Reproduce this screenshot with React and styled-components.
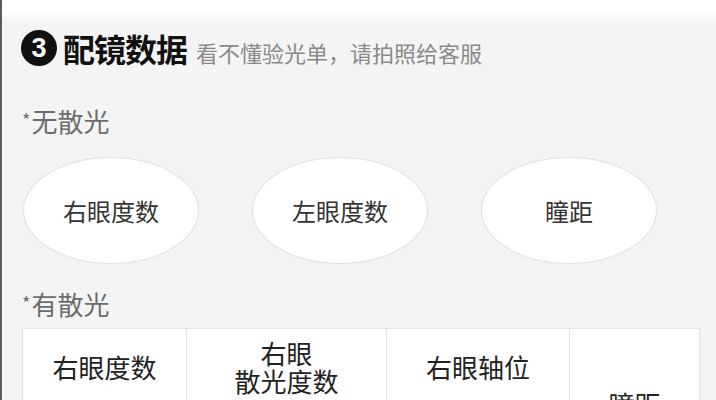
import styled, { createGlobalStyle } from "styled-components";

const GlobalStyle = createGlobalStyle`
  body {
    margin: 0;
    background: #f4f4f4;
    font-family: "Noto Sans CJK SC", "Noto Sans", sans-serif;
  }
`;

const noAstigmatism = ["右眼度数", "左眼度数", "瞳距"];

const App = () => {
  return (
    <Page>
      <GlobalStyle />
      <Header>
        <StepBadge>3</StepBadge>
        <Title>配镜数据</Title>
        <Hint>看不懂验光单，请拍照给客服</Hint>
      </Header>

      <Label>
        <Star>*</Star>无散光
      </Label>
      <OvalRow>
        {noAstigmatism.map((name) => (
          <Oval key={name}>{name}</Oval>
        ))}
      </OvalRow>

      <Label $tight>
        <Star>*</Star>有散光
      </Label>
      <Table>
        <Cell>右眼度数</Cell>
        <Cell $top="10px">
          右眼
          <br />
          散光度数
        </Cell>
        <Cell>右眼轴位</Cell>
        <Cell $center>瞳距</Cell>
      </Table>
    </Page>
  );
};

export default App;

const Page = styled.div`
  height: 400px;
  overflow: hidden;
  box-sizing: border-box;
  border-left: 2px solid #5c5c5c;
  background: linear-gradient(#ffffff 0, #ffffff 12px, #f4f4f4 22px);
`;

const Header = styled.div`
  display: flex;
  align-items: center;
  padding: 29px 0 0 19px;
`;

const StepBadge = styled.div`
  width: 36px;
  height: 36px;
  border-radius: 50%;
  background: #111;
  color: #fff;
  font-family: "Liberation Sans", Arial, sans-serif;
  font-size: 27px;
  font-weight: 700;
  line-height: 36px;
  text-align: center;
`;

const Title = styled.div`
  margin-left: 6px;
  font-size: 32px;
  letter-spacing: -1px;
  font-weight: 700;
  color: #111;
  line-height: 36px;
`;

const Hint = styled.div`
  margin-left: 9px;
  margin-top: 8px;
  font-size: 22px;
  color: #8a8a8a;
  line-height: 30px;
`;

const Label = styled.div`
  margin-top: ${(p) => (p.$tight ? "22px" : "36px")};
  padding-left: 20px;
  font-size: 26px;
  color: #6c6c6c;
  line-height: 32px;
`;

const Star = styled.span`
  font-size: 18px;
  vertical-align: 5px;
  margin-right: 1px;
`;

const OvalRow = styled.div`
  display: flex;
  gap: 53px;
  padding-left: 21px;
  margin-top: 20px;
`;

const Oval = styled.div`
  width: 176px;
  height: 107px;
  box-sizing: border-box;
  border-radius: 50%;
  background: #fff;
  border: 1px solid #e0e0e0;
  display: flex;
  align-items: center;
  justify-content: center;
  font-size: 24px;
  color: #333;
`;

const Table = styled.div`
  display: grid;
  grid-template-columns: 163px 200px 183px 130px;
  margin: 8px 0 0 20px;
  width: 676px;
  height: 150px;
  border: 1px solid #e4e4e4;
  background: #fff;
`;

const Cell = styled.div`
  box-sizing: border-box;
  border-left: 1px solid #e4e4e4;
  &:first-child {
    border-left: none;
  }
  display: flex;
  justify-content: center;
  align-items: ${(p) => (p.$center ? "center" : "flex-start")};
  padding-top: ${(p) => (p.$center ? "0" : p.$top || "24px")};
  text-align: center;
  font-size: 26px;
  line-height: 28px;
  color: #222;
`;
